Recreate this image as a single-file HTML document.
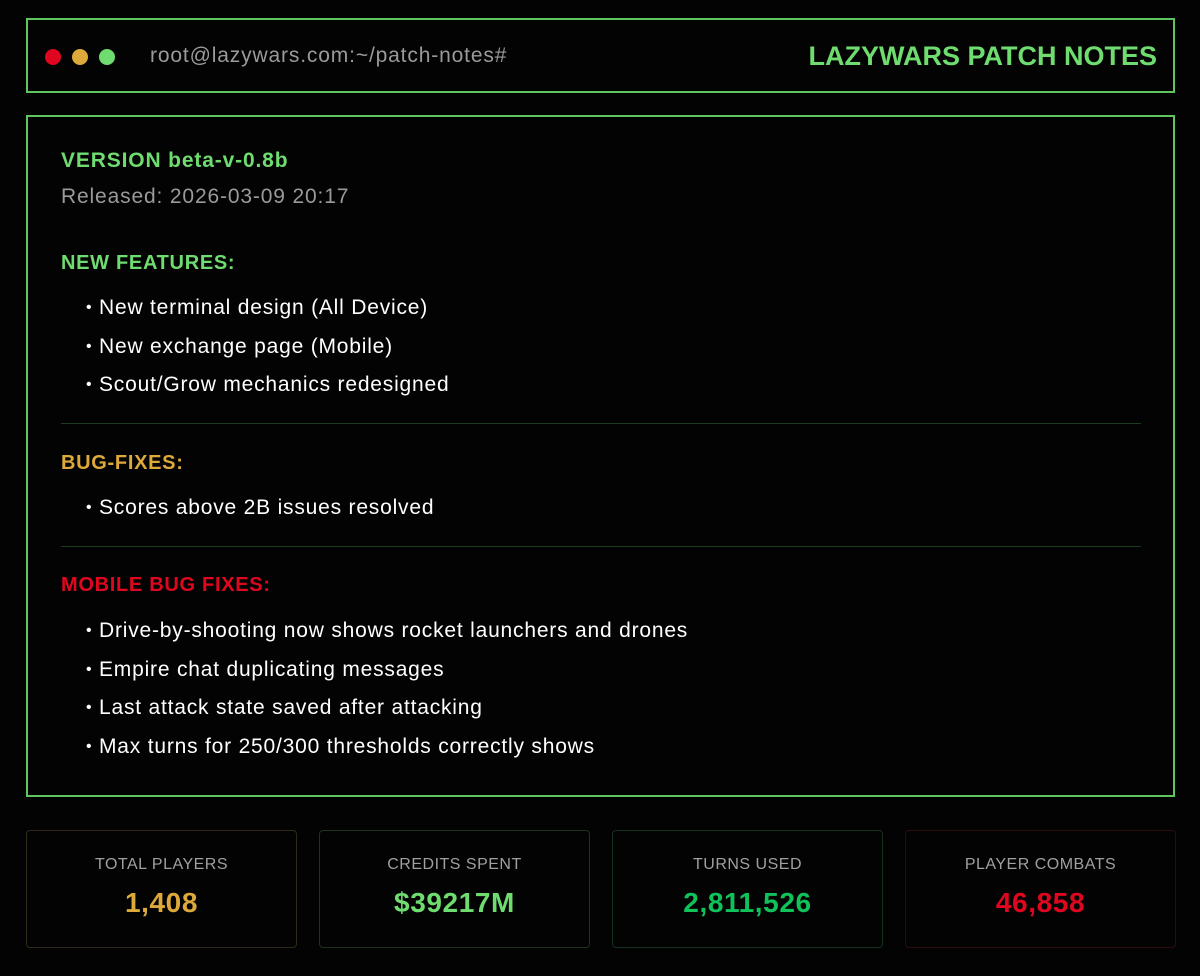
<!DOCTYPE html>
<html><head><style>
*{margin:0;padding:0;box-sizing:border-box}
body{width:1200px;height:976px;background:#030303;font-family:"Liberation Sans",sans-serif;position:relative;overflow:hidden}
.hdr{position:absolute;left:26px;top:18px;width:1149px;height:75px;border:2px solid #5fc65f}
.dot{position:absolute;top:29px;width:16px;height:16px;border-radius:50%}
.path{position:absolute;left:122px;top:24px;font-size:21px;color:#9a9a9a;letter-spacing:0.85px}
.title{position:absolute;right:16px;top:21px;font-size:27px;font-weight:bold;color:#6fdc6f}
.main{position:absolute;left:26px;top:115px;width:1149px;height:682px;border:2px solid #5fc65f}
.t{position:absolute;left:33px;font-size:21px;white-space:nowrap;letter-spacing:0.85px}
.b{position:absolute;left:71px;font-size:21px;color:#fff;white-space:nowrap;letter-spacing:0.8px}
.b:before{content:"•";font-size:16px;position:absolute;left:-13px;top:3px}
.hr{position:absolute;left:33px;width:1080px;height:1px;background:#1e3a1e}
.card{position:absolute;top:830px;width:271px;height:118px;border:1px solid;border-radius:4px;text-align:center}
.card .l{margin-top:25px;font-size:16px;color:#a0a0a0;letter-spacing:.5px}
.card .v{margin-top:13px;font-size:28px;font-weight:bold;letter-spacing:0.6px}
</style></head><body>
<div class="hdr">
<div class="dot" style="left:17px;background:#e0061f"></div>
<div class="dot" style="left:44px;background:#dda93a"></div>
<div class="dot" style="left:71px;background:#6fdc6f"></div>
<div class="path">root@lazywars.com:~/patch-notes#</div>
<div class="title">LAZYWARS PATCH NOTES</div>
</div>
<div class="main">
<div class="t" style="top:32px;color:#6fdc6f;font-weight:bold">VERSION beta-v-0.8b</div>
<div class="t" style="top:68px;color:#9a9a9a">Released: 2026-03-09 20:17</div>
<div class="t" style="top:135px;color:#6fdc6f;font-weight:bold;font-size:20px;letter-spacing:0.7px">NEW FEATURES:</div>
<div class="b" style="top:179px">New terminal design (All Device)</div>
<div class="b" style="top:218px">New exchange page (Mobile)</div>
<div class="b" style="top:256px">Scout/Grow mechanics redesigned</div>
<div class="hr" style="top:306px"></div>
<div class="t" style="top:335px;color:#dda93a;font-weight:bold;font-size:20px;letter-spacing:0.7px">BUG-FIXES:</div>
<div class="b" style="top:379px">Scores above 2B issues resolved</div>
<div class="hr" style="top:429px"></div>
<div class="t" style="top:457px;color:#e0061f;font-weight:bold;font-size:20px;letter-spacing:0.7px">MOBILE BUG FIXES:</div>
<div class="b" style="top:502px">Drive-by-shooting now shows rocket launchers and drones</div>
<div class="b" style="top:541px">Empire chat duplicating messages</div>
<div class="b" style="top:579px">Last attack state saved after attacking</div>
<div class="b" style="top:618px">Max turns for 250/300 thresholds correctly shows</div>
</div>
<div class="card" style="left:26px;border-color:#2e2a17"><div class="l">TOTAL PLAYERS</div><div class="v" style="color:#dda93a">1,408</div></div>
<div class="card" style="left:319px;border-color:#1c331c"><div class="l">CREDITS SPENT</div><div class="v" style="color:#6fdc6f">$39217M</div></div>
<div class="card" style="left:612px;border-color:#15301f"><div class="l">TURNS USED</div><div class="v" style="color:#0fc35a">2,811,526</div></div>
<div class="card" style="left:905px;border-color:#2d0c10"><div class="l">PLAYER COMBATS</div><div class="v" style="color:#e0061f">46,858</div></div>
</body></html>
